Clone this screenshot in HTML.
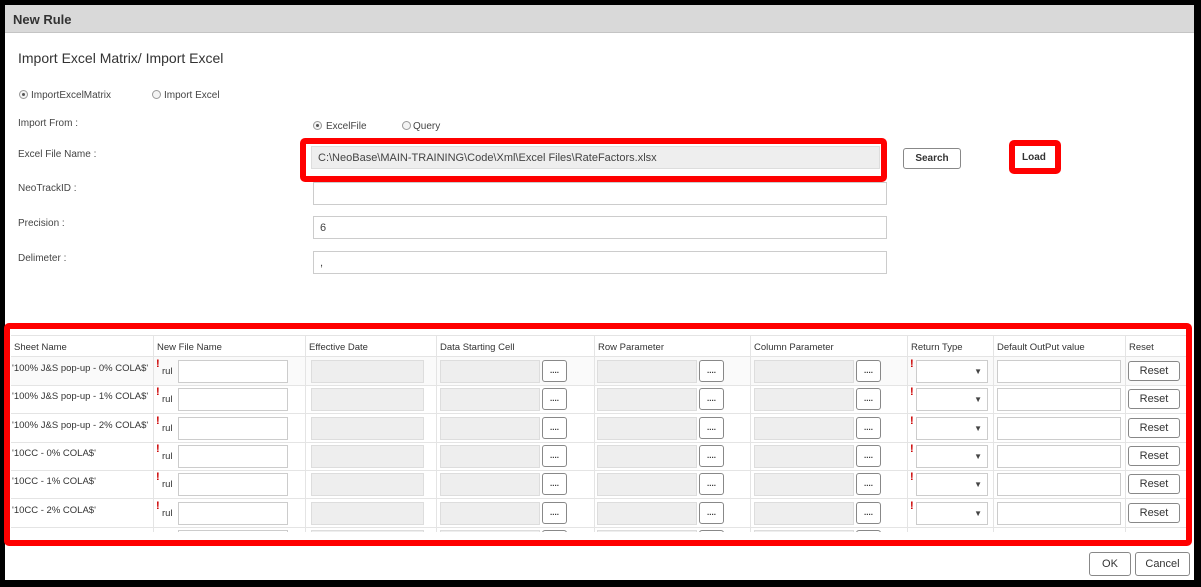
<!DOCTYPE html>
<html><head><meta charset="utf-8">
<style>
*{box-sizing:border-box;margin:0;padding:0}
body{width:1201px;height:587px;background:#000;position:relative;overflow:hidden;font-family:"Liberation Sans",sans-serif;color:#333}
.a{position:absolute}
.main{left:5px;top:5px;width:1189px;height:575px;background:#fff}
.hdr{left:5px;top:5px;width:1189px;height:28px;background:#d9d9d9;border-bottom:1px solid #c4c4c4;font-size:13px;font-weight:bold;color:#333;padding:7px 0 0 8px}
.lbl{font-size:10px;color:#444}
.inp{border:1px solid #ccc;background:#fff;height:23px;font-size:11px;padding:5px 6px;color:#444}
.g{background:#eee;border:1px solid #ddd}
.btn{border:1px solid #888;border-radius:3px;background:#fff;font-size:10px;text-align:center;color:#333;font-weight:bold}
.rad{width:9px;height:9px;border:1px solid #999;border-radius:50%;background:#f4f4f4}
.rad.on::after{content:"";position:absolute;left:2px;top:2px;width:3px;height:3px;border-radius:50%;background:#555}
.red{border:6px solid #f00;border-radius:5px}
.row{position:absolute;left:0;width:1175px;height:29px;border-bottom:1px solid #e4e4e4}
.vl{position:absolute;top:0;bottom:0;width:1px;background:#e4e4e4}
.t{font-size:9.5px;color:#333;white-space:nowrap}
.ex{color:#c00;font-size:11px;font-weight:bold}
.dot{font-size:8px;line-height:20px}
</style></head><body>
<div class="a main"></div>
<div class="a hdr">New Rule</div>
<div class="a" style="left:18px;top:50px;font-size:14px;color:#333">Import Excel Matrix/ Import Excel</div>

<div class="a rad on" style="left:19px;top:90px"></div><div class="a lbl" style="left:31px;top:90px">ImportExcelMatrix</div>
<div class="a rad" style="left:152px;top:90px"></div><div class="a lbl" style="left:164px;top:90px">Import Excel</div>

<div class="a lbl" style="left:18px;top:118px">Import From :</div>
<div class="a rad on" style="left:313px;top:121px"></div><div class="a lbl" style="left:326px;top:121px">ExcelFile</div>
<div class="a rad" style="left:402px;top:121px"></div><div class="a lbl" style="left:413px;top:121px">Query</div>

<div class="a lbl" style="left:18px;top:149px">Excel File Name :</div>
<div class="a inp g" style="left:311px;top:146px;width:569px">C:\NeoBase\MAIN-TRAINING\Code\Xml\Excel Files\RateFactors.xlsx</div>
<div class="a red" style="left:300px;top:138px;width:587px;height:44px"></div>
<div class="a btn" style="left:903px;top:148px;width:58px;height:21px;padding-top:4px">Search</div>
<div class="a red" style="left:1009px;top:140px;width:52px;height:34px;background:#fff"></div>
<div class="a t" style="left:1022px;top:152px;font-weight:bold;font-size:10px">Load</div>

<div class="a lbl" style="left:18px;top:183px">NeoTrackID :</div>
<div class="a inp" style="left:313px;top:182px;width:574px"></div>
<div class="a lbl" style="left:18px;top:218px">Precision :</div>
<div class="a inp" style="left:313px;top:216px;width:574px">6</div>
<div class="a lbl" style="left:18px;top:253px">Delimeter :</div>
<div class="a inp" style="left:313px;top:251px;width:574px">,</div>

<div class="a" style="left:11px;top:335px;width:1175px;height:22px;overflow:hidden">
 <div class="row" style="top:0;height:22px;border-top:1px solid #e4e4e4">
  <div class="vl" style="left:142px"></div><div class="vl" style="left:294px"></div><div class="vl" style="left:425px"></div><div class="vl" style="left:583px"></div><div class="vl" style="left:739px"></div><div class="vl" style="left:896px"></div><div class="vl" style="left:982px"></div><div class="vl" style="left:1114px"></div>
  <div class="a t" style="left:3px;top:6px">Sheet Name</div>
  <div class="a t" style="left:146px;top:6px">New File Name</div>
  <div class="a t" style="left:298px;top:6px">Effective Date</div>
  <div class="a t" style="left:429px;top:6px">Data Starting Cell</div>
  <div class="a t" style="left:587px;top:6px">Row Parameter</div>
  <div class="a t" style="left:743px;top:6px">Column Parameter</div>
  <div class="a t" style="left:900px;top:6px">Return Type</div>
  <div class="a t" style="left:986px;top:6px">Default OutPut value</div>
  <div class="a t" style="left:1118px;top:6px">Reset</div>
 </div>
</div>

<div class="a" style="left:11px;top:357px;width:1175px;height:175px;overflow:hidden">
<div class="row" style="top:0;background:#fafafa">
<div class="vl" style="left:142px"></div><div class="vl" style="left:294px"></div><div class="vl" style="left:425px"></div><div class="vl" style="left:583px"></div><div class="vl" style="left:739px"></div><div class="vl" style="left:896px"></div><div class="vl" style="left:982px"></div><div class="vl" style="left:1114px"></div>
<div class="a t" style="left:1px;top:6px">'100% J&amp;S pop-up - 0% COLA$'</div>
<div class="a ex" style="left:145px;top:1px">!</div><div class="a t" style="left:151px;top:9px">rul</div>
<div class="a inp" style="left:167px;top:3px;width:110px"></div>
<div class="a inp g" style="left:300px;top:3px;width:113px"></div>
<div class="a inp g" style="left:429px;top:3px;width:100px"></div><div class="a btn dot" style="left:531px;top:3px;width:25px;height:22px">....</div>
<div class="a inp g" style="left:586px;top:3px;width:100px"></div><div class="a btn dot" style="left:688px;top:3px;width:25px;height:22px">....</div>
<div class="a inp g" style="left:743px;top:3px;width:100px"></div><div class="a btn dot" style="left:845px;top:3px;width:25px;height:22px">....</div>
<div class="a ex" style="left:899px;top:1px">!</div><div class="a inp" style="left:905px;top:3px;width:72px;font-size:8px;text-align:right;padding:6px 5px">▼</div>
<div class="a inp" style="left:986px;top:3px;width:124px"></div>
<div class="a btn" style="left:1117px;top:4px;width:52px;height:20px;font-size:11px;font-weight:normal;padding-top:3px">Reset</div>
</div>
<div class="row" style="top:28px">
<div class="vl" style="left:142px"></div><div class="vl" style="left:294px"></div><div class="vl" style="left:425px"></div><div class="vl" style="left:583px"></div><div class="vl" style="left:739px"></div><div class="vl" style="left:896px"></div><div class="vl" style="left:982px"></div><div class="vl" style="left:1114px"></div>
<div class="a t" style="left:1px;top:6px">'100% J&amp;S pop-up - 1% COLA$'</div>
<div class="a ex" style="left:145px;top:1px">!</div><div class="a t" style="left:151px;top:9px">rul</div>
<div class="a inp" style="left:167px;top:3px;width:110px"></div>
<div class="a inp g" style="left:300px;top:3px;width:113px"></div>
<div class="a inp g" style="left:429px;top:3px;width:100px"></div><div class="a btn dot" style="left:531px;top:3px;width:25px;height:22px">....</div>
<div class="a inp g" style="left:586px;top:3px;width:100px"></div><div class="a btn dot" style="left:688px;top:3px;width:25px;height:22px">....</div>
<div class="a inp g" style="left:743px;top:3px;width:100px"></div><div class="a btn dot" style="left:845px;top:3px;width:25px;height:22px">....</div>
<div class="a ex" style="left:899px;top:1px">!</div><div class="a inp" style="left:905px;top:3px;width:72px;font-size:8px;text-align:right;padding:6px 5px">▼</div>
<div class="a inp" style="left:986px;top:3px;width:124px"></div>
<div class="a btn" style="left:1117px;top:4px;width:52px;height:20px;font-size:11px;font-weight:normal;padding-top:3px">Reset</div>
</div>
<div class="row" style="top:57px">
<div class="vl" style="left:142px"></div><div class="vl" style="left:294px"></div><div class="vl" style="left:425px"></div><div class="vl" style="left:583px"></div><div class="vl" style="left:739px"></div><div class="vl" style="left:896px"></div><div class="vl" style="left:982px"></div><div class="vl" style="left:1114px"></div>
<div class="a t" style="left:1px;top:6px">'100% J&amp;S pop-up - 2% COLA$'</div>
<div class="a ex" style="left:145px;top:1px">!</div><div class="a t" style="left:151px;top:9px">rul</div>
<div class="a inp" style="left:167px;top:3px;width:110px"></div>
<div class="a inp g" style="left:300px;top:3px;width:113px"></div>
<div class="a inp g" style="left:429px;top:3px;width:100px"></div><div class="a btn dot" style="left:531px;top:3px;width:25px;height:22px">....</div>
<div class="a inp g" style="left:586px;top:3px;width:100px"></div><div class="a btn dot" style="left:688px;top:3px;width:25px;height:22px">....</div>
<div class="a inp g" style="left:743px;top:3px;width:100px"></div><div class="a btn dot" style="left:845px;top:3px;width:25px;height:22px">....</div>
<div class="a ex" style="left:899px;top:1px">!</div><div class="a inp" style="left:905px;top:3px;width:72px;font-size:8px;text-align:right;padding:6px 5px">▼</div>
<div class="a inp" style="left:986px;top:3px;width:124px"></div>
<div class="a btn" style="left:1117px;top:4px;width:52px;height:20px;font-size:11px;font-weight:normal;padding-top:3px">Reset</div>
</div>
<div class="row" style="top:85px">
<div class="vl" style="left:142px"></div><div class="vl" style="left:294px"></div><div class="vl" style="left:425px"></div><div class="vl" style="left:583px"></div><div class="vl" style="left:739px"></div><div class="vl" style="left:896px"></div><div class="vl" style="left:982px"></div><div class="vl" style="left:1114px"></div>
<div class="a t" style="left:1px;top:6px">'10CC - 0% COLA$'</div>
<div class="a ex" style="left:145px;top:1px">!</div><div class="a t" style="left:151px;top:9px">rul</div>
<div class="a inp" style="left:167px;top:3px;width:110px"></div>
<div class="a inp g" style="left:300px;top:3px;width:113px"></div>
<div class="a inp g" style="left:429px;top:3px;width:100px"></div><div class="a btn dot" style="left:531px;top:3px;width:25px;height:22px">....</div>
<div class="a inp g" style="left:586px;top:3px;width:100px"></div><div class="a btn dot" style="left:688px;top:3px;width:25px;height:22px">....</div>
<div class="a inp g" style="left:743px;top:3px;width:100px"></div><div class="a btn dot" style="left:845px;top:3px;width:25px;height:22px">....</div>
<div class="a ex" style="left:899px;top:1px">!</div><div class="a inp" style="left:905px;top:3px;width:72px;font-size:8px;text-align:right;padding:6px 5px">▼</div>
<div class="a inp" style="left:986px;top:3px;width:124px"></div>
<div class="a btn" style="left:1117px;top:4px;width:52px;height:20px;font-size:11px;font-weight:normal;padding-top:3px">Reset</div>
</div>
<div class="row" style="top:113px">
<div class="vl" style="left:142px"></div><div class="vl" style="left:294px"></div><div class="vl" style="left:425px"></div><div class="vl" style="left:583px"></div><div class="vl" style="left:739px"></div><div class="vl" style="left:896px"></div><div class="vl" style="left:982px"></div><div class="vl" style="left:1114px"></div>
<div class="a t" style="left:1px;top:6px">'10CC - 1% COLA$'</div>
<div class="a ex" style="left:145px;top:1px">!</div><div class="a t" style="left:151px;top:9px">rul</div>
<div class="a inp" style="left:167px;top:3px;width:110px"></div>
<div class="a inp g" style="left:300px;top:3px;width:113px"></div>
<div class="a inp g" style="left:429px;top:3px;width:100px"></div><div class="a btn dot" style="left:531px;top:3px;width:25px;height:22px">....</div>
<div class="a inp g" style="left:586px;top:3px;width:100px"></div><div class="a btn dot" style="left:688px;top:3px;width:25px;height:22px">....</div>
<div class="a inp g" style="left:743px;top:3px;width:100px"></div><div class="a btn dot" style="left:845px;top:3px;width:25px;height:22px">....</div>
<div class="a ex" style="left:899px;top:1px">!</div><div class="a inp" style="left:905px;top:3px;width:72px;font-size:8px;text-align:right;padding:6px 5px">▼</div>
<div class="a inp" style="left:986px;top:3px;width:124px"></div>
<div class="a btn" style="left:1117px;top:4px;width:52px;height:20px;font-size:11px;font-weight:normal;padding-top:3px">Reset</div>
</div>
<div class="row" style="top:142px">
<div class="vl" style="left:142px"></div><div class="vl" style="left:294px"></div><div class="vl" style="left:425px"></div><div class="vl" style="left:583px"></div><div class="vl" style="left:739px"></div><div class="vl" style="left:896px"></div><div class="vl" style="left:982px"></div><div class="vl" style="left:1114px"></div>
<div class="a t" style="left:1px;top:6px">'10CC - 2% COLA$'</div>
<div class="a ex" style="left:145px;top:1px">!</div><div class="a t" style="left:151px;top:9px">rul</div>
<div class="a inp" style="left:167px;top:3px;width:110px"></div>
<div class="a inp g" style="left:300px;top:3px;width:113px"></div>
<div class="a inp g" style="left:429px;top:3px;width:100px"></div><div class="a btn dot" style="left:531px;top:3px;width:25px;height:22px">....</div>
<div class="a inp g" style="left:586px;top:3px;width:100px"></div><div class="a btn dot" style="left:688px;top:3px;width:25px;height:22px">....</div>
<div class="a inp g" style="left:743px;top:3px;width:100px"></div><div class="a btn dot" style="left:845px;top:3px;width:25px;height:22px">....</div>
<div class="a ex" style="left:899px;top:1px">!</div><div class="a inp" style="left:905px;top:3px;width:72px;font-size:8px;text-align:right;padding:6px 5px">▼</div>
<div class="a inp" style="left:986px;top:3px;width:124px"></div>
<div class="a btn" style="left:1117px;top:4px;width:52px;height:20px;font-size:11px;font-weight:normal;padding-top:3px">Reset</div>
</div>
<div class="row" style="top:170px">
<div class="vl" style="left:142px"></div><div class="vl" style="left:294px"></div><div class="vl" style="left:425px"></div><div class="vl" style="left:583px"></div><div class="vl" style="left:739px"></div><div class="vl" style="left:896px"></div><div class="vl" style="left:982px"></div><div class="vl" style="left:1114px"></div>
<div class="a inp" style="left:167px;top:3px;width:110px"></div>
<div class="a inp g" style="left:300px;top:3px;width:113px"></div>
<div class="a inp g" style="left:429px;top:3px;width:100px"></div><div class="a btn" style="left:531px;top:3px;width:25px;height:22px"></div>
<div class="a inp g" style="left:586px;top:3px;width:100px"></div><div class="a btn" style="left:688px;top:3px;width:25px;height:22px"></div>
<div class="a inp g" style="left:743px;top:3px;width:100px"></div><div class="a btn" style="left:845px;top:3px;width:25px;height:22px"></div>
</div>
</div>

<div class="a red" style="left:4px;top:323px;width:1188px;height:223px"></div>

<div class="a btn" style="left:1089px;top:552px;width:42px;height:24px;font-size:11px;font-weight:normal;padding-top:5px">OK</div>
<div class="a btn" style="left:1135px;top:552px;width:55px;height:24px;font-size:11px;font-weight:normal;padding-top:5px">Cancel</div>
</body></html>
